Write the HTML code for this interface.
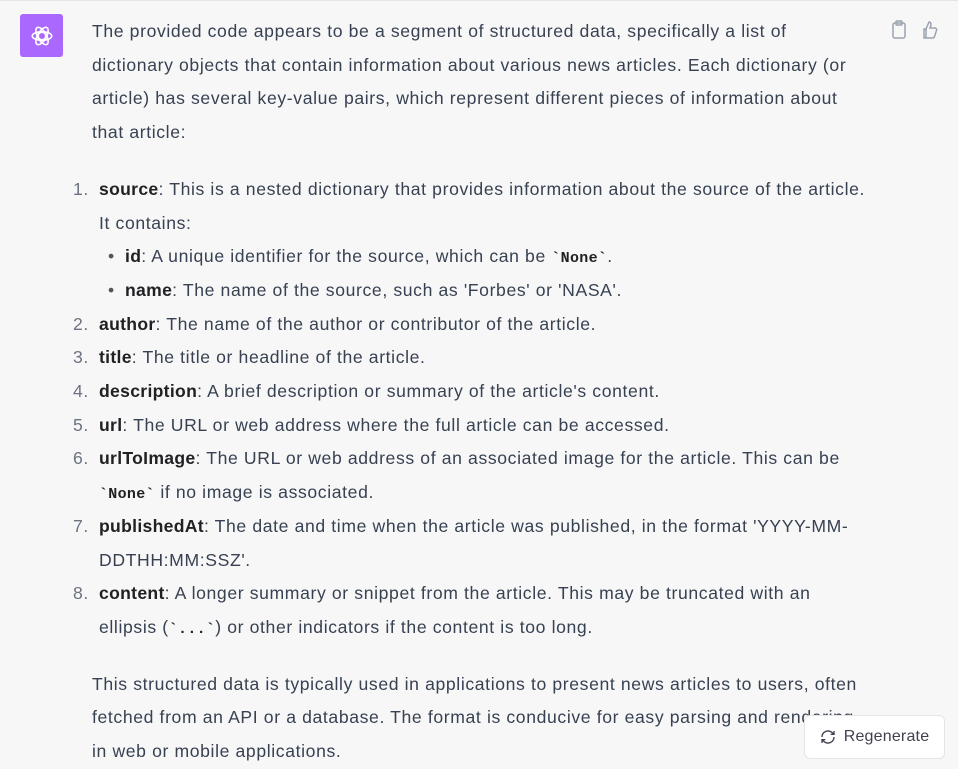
<!DOCTYPE html>
<html><head><meta charset="utf-8"><style>
html,body{margin:0;padding:0;}
body{width:958px;height:769px;overflow:hidden;background:#f7f7f8;font-family:"Liberation Sans",sans-serif;color:#374151;font-size:17.6px;letter-spacing:0.62px;line-height:33.7px;position:relative;}
.top{position:absolute;left:0;top:0;width:958px;height:1px;background:#e5e5e8;}
.av{position:absolute;left:20px;top:14px;width:43px;height:43px;background:#ab68ff;border-radius:3px;display:flex;align-items:center;justify-content:center;}
.txt{position:absolute;left:92px;top:15px;width:860px;white-space:nowrap;}
p{margin:0;}
b{color:#202123;font-weight:bold;letter-spacing:0.3px;}
ol{margin:23px 0 23px 0;padding:0 0 0 7px;list-style:none;}
li{position:relative;}
.n{position:absolute;left:-26px;color:#6b7280;}
ul{margin:0;padding:0 0 0 26px;list-style:none;}
ul li:before{content:"•";position:absolute;left:-17px;color:#555;}
code{font-family:"Liberation Mono",monospace;font-weight:bold;font-size:15px;line-height:1;color:#202123;letter-spacing:0.3px;}
.icons{position:absolute;left:890px;top:18px;}
.regen{position:absolute;left:804px;top:715px;width:141px;height:44px;box-sizing:border-box;background:#fff;border:1px solid #e5e5e8;border-radius:6px;font-size:16px;letter-spacing:0.2px;color:#40414f;display:flex;align-items:center;justify-content:center;gap:8px;}
</style></head><body>
<div class="top"></div>
<div class="av"><svg width="26" height="26" viewBox="0 0 24 24" fill="none" stroke="#fff" stroke-width="1.5"><circle cx="12" cy="12" r="3.5"/><ellipse cx="12" cy="12" rx="9" ry="4" transform="rotate(60 12 12)"/><ellipse cx="12" cy="12" rx="9" ry="4" transform="rotate(-60 12 12)"/><ellipse cx="12" cy="12" rx="9" ry="4"/></svg></div>
<div class="icons"><svg width="60" height="20" viewBox="0 0 60 20" fill="none" stroke="#9ca3af" stroke-width="1.5"><rect x="3" y="3" width="12" height="15" rx="2"/><rect x="6" y="1" width="6" height="4" rx="1"/><path d="M36 9v9h-2V9zM36 9l3-7c2 0 2 2 2 3l-1 3h5c1 0 2 1 1.5 2.5l-2 6c-.3 1-1 1.5-2 1.5H36"/></svg></div>
<div class="txt">
<p>The provided code appears to be a segment of structured data, specifically a list of<br>dictionary objects that contain information about various news articles. Each dictionary (or<br>article) has several key-value pairs, which represent different pieces of information about<br>that article:</p>
<ol>
<li><span class="n">1.</span><b>source</b>: This is a nested dictionary that provides information about the source of the article.<br>It contains:
<ul><li><b>id</b>: A unique identifier for the source, which can be <code>`None`</code>.</li><li><b>name</b>: The name of the source, such as 'Forbes' or 'NASA'.</li></ul></li>
<li><span class="n">2.</span><b>author</b>: The name of the author or contributor of the article.</li>
<li><span class="n">3.</span><b>title</b>: The title or headline of the article.</li>
<li><span class="n">4.</span><b>description</b>: A brief description or summary of the article's content.</li>
<li><span class="n">5.</span><b>url</b>: The URL or web address where the full article can be accessed.</li>
<li><span class="n">6.</span><b>urlToImage</b>: The URL or web address of an associated image for the article. This can be<br><code>`None`</code> if no image is associated.</li>
<li><span class="n">7.</span><b>publishedAt</b>: The date and time when the article was published, in the format 'YYYY-MM-<br>DDTHH:MM:SSZ'.</li>
<li><span class="n">8.</span><b>content</b>: A longer summary or snippet from the article. This may be truncated with an<br>ellipsis (<code>`...`</code>) or other indicators if the content is too long.</li>
</ol>
<p>This structured data is typically used in applications to present news articles to users, often<br>fetched from an API or a database. The format is conducive for easy parsing and rendering<br>in web or mobile applications.</p>
</div>
<div class="regen"><svg width="16" height="16" viewBox="0 0 24 24" fill="none" stroke="#40414f" stroke-width="2"><path d="M3 12a9 9 0 0 1 15-6.7L21 8M21 3v5h-5M21 12a9 9 0 0 1-15 6.7L3 16M3 21v-5h5"/></svg>Regenerate</div>
</body></html>
